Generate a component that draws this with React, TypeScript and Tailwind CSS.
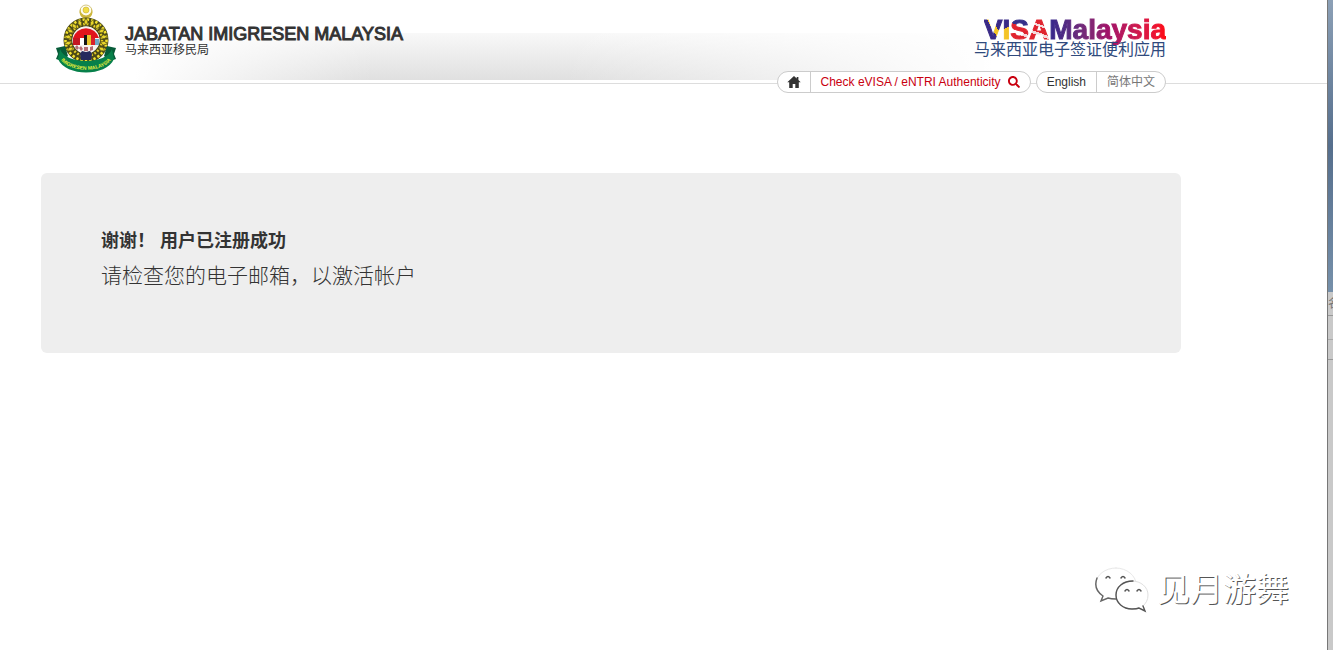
import { FaSearch } from "react-icons/fa";

const LEAVES = Array.from({ length: 13 }, (_, i) => (i - 6) * 20);

const Emblem = () => (
  <svg viewBox="0 0 62 70" className="h-[70px] w-[62px] shrink-0" role="img" aria-label="Jabatan Imigresen Malaysia">
    {/* crescent and star */}
    <circle cx="31" cy="7" r="6" fill="#fffdf0" stroke="#c9b965" strokeWidth="0.8" />
    <path d="M26 4a6.5 6.5 0 1 0 10 0a5.4 5.4 0 1 1-10 0z" fill="#cdb63c" />
    <circle cx="31" cy="6" r="3" fill="#f2de45" stroke="#c4ad38" strokeWidth="0.6" />
    {/* wreath */}
    <circle cx="31" cy="36" r="18" fill="none" stroke="#4c4a17" strokeWidth="9" />
    <circle cx="31" cy="36" r="20.5" fill="none" stroke="#f3e22e" strokeWidth="2.6" strokeDasharray="2.4 2" />
    <circle cx="31" cy="36" r="16" fill="none" stroke="#e6cf25" strokeWidth="2.4" strokeDasharray="1.8 1.8" />
    {LEAVES.map((angle) => (
      <path key={angle} d="M31 14l2 4-2 3.5-2-3.5z" fill="#e9d62b" stroke="#5d5a1b" strokeWidth="0.7" transform={`rotate(${angle} 31 36)`} />
    ))}
    {/* shield */}
    <circle cx="31" cy="36" r="13.5" fill="#f7f4f1" />
    <path d="M18 34a13.5 13.5 0 0 1 26 0z" fill="#e0141c" />
    <path d="M18 34h7v7h-7z" fill="#c41722" />
    <path d="M25 34h4v7h-4z" fill="#fff" />
    <path d="M29 31h3v10h-3z" fill="#171717" />
    <path d="M32 31h4v10h-4z" fill="#e8c32a" />
    <path d="M36 34h4v7h-4z" fill="#d82029" />
    <path d="M40 35h4v6h-4z" fill="#6fa8c6" />
    <path d="M20 43l2-2 2 3-2 2zM24 44l2-2 2 3-2 2zM29 43h4v4h-4zM35 43l3-1v4l-3 1z" fill="#b56b72" />
    <path d="M25 50l2-3 4 1 4-1 2 3-1 6h-10z" fill="#252b5e" />
    {/* ribbon */}
    <path d="M1 44l9-2 3 10-6 5-6-2 2-5zM61 44l-9-2-3 10 6 5 6-2-2-5z" fill="#075b38" />
    <path d="M5 45C10 61 52 61 57 45l2 10C51 73 11 73 3 55z" fill="#07804a" />
    <path id="ribbon" d="M4 53C12 70 50 70 58 53" fill="none" />
    <text fontFamily="Liberation Sans, sans-serif" fontSize="5" fontWeight="bold" fill="#e7ef3a" textAnchor="middle">
      <textPath href="#ribbon" startOffset="50%">IMIGRESEN MALAYSIA</textPath>
    </text>
  </svg>
);

const HomeIcon = () => (
  <svg viewBox="0 0 14 12" className="h-3 w-3.5" fill="currentColor" aria-hidden="true">
    <path d="M7 0L0.3 6.3h1.9V12h3.5V8h2.6v4h3.5V6.3h1.9L11.4 4V1H9.7v1.5z" />
  </svg>
);

const VisaLogo = () => (
  <a href="#" className="flex flex-col items-end">
    <span className="text-[28px] leading-6 font-bold [-webkit-text-stroke:1px_transparent]">
      <span className="bg-[linear-gradient(60deg,#3a2a86_48%,#f4c426_48%,#f4c426_62%,#3a2a86_62%)] bg-clip-text text-transparent">V</span>
      <span className="bg-[linear-gradient(150deg,#3a2a86_45%,#f4c426_45%)] bg-clip-text text-transparent">I</span>
      <span className="bg-[linear-gradient(20deg,#e0242f_36%,#f3d8da_36%,#f3d8da_44%,#e0242f_44%,#e0242f_60%,#35308a_60%)] bg-clip-text text-transparent">S</span>
      <span className="bg-[linear-gradient(20deg,#e0242f_34%,#f3d8da_34%,#f3d8da_42%,#e0242f_42%,#e0242f_58%,#f3d8da_58%,#f3d8da_64%,#e0242f_64%)] bg-clip-text text-transparent">A</span>
      <span className="bg-linear-to-r from-[#33268c] via-[#a01269] to-[#ff0a0a] bg-clip-text text-transparent">Malaysia</span>
    </span>
    <span className="text-base leading-4 text-[#2f4a7d]">马来西亚电子签证便利应用</span>
  </a>
);

const WeChatIcon = () => (
  <svg viewBox="0 0 54 46" className="h-[46px] w-[54px]" fill="#fff" strokeLinecap="round" aria-hidden="true">
    <path d="M21 1C10 1 1 8 1 17c0 5 3 9 7 12l-2 5 7-3c3 1 6 1 9 1 10 0 19-7 19-15S32 1 21 1z" stroke="#e8e8e8" />
    <path d="M2 11c-3 8 0 14 6 18l-2 5 7-3c3 1 5 1 8 1" fill="none" stroke="#666" strokeWidth="1.4" />
    <path d="M37 14c-9 0-16 6-16 14s7 14 16 14c3 0 5 0 7-1l6 3-2-5c3-3 5-6 5-11 0-8-7-14-16-14z" stroke="#e0e0e0" />
    <path d="M38 14c-10 0-17 6-17 14s7 14 16 14c3 0 5 0 7-1l6 3-2-5" fill="none" stroke="#555" strokeWidth="1.4" />
    <path d="M11 11q2-3 4 0M26 11q2-3 4 0M30 24q2-3 4 0M42 24q2-3 4 0" fill="none" stroke="#555" strokeWidth="1.5" />
  </svg>
);

const Header = () => (
  <header>
    <div className="h-[84px] border-b border-[#ddd]">
      <div className="flex h-20 max-w-[1181px] items-start justify-between bg-[linear-gradient(100deg,#fff_12%,transparent_32%,transparent_48%,#fff_84%),linear-gradient(to_bottom,#f8f8f8,#e0e0e0)] bg-[length:100%_47px] bg-bottom bg-no-repeat pr-[15px] pl-[55px]">
        <a href="#" className="flex gap-2 pt-1">
          <Emblem />
          <span className="flex flex-col pt-5 text-[#333]">
            <span className="text-lg leading-5 [-webkit-text-stroke:1px_#333]">JABATAN IMIGRESEN MALAYSIA</span>
            <span className="text-xs leading-3">马来西亚移民局</span>
          </span>
        </a>
        <div className="pt-[18px]">
          <VisaLogo />
        </div>
      </div>
    </div>
    <nav className="relative -mt-[13px] flex max-w-[1166px] justify-end gap-[5px] text-xs text-[#333]">
      <div className="flex h-[22px] overflow-hidden rounded-full border border-[#ccc] bg-white">
        <a href="#" aria-label="Home" className="flex items-center border-r border-[#ccc] px-[9px]">
          <HomeIcon />
        </a>
        <a href="#" className="flex items-center gap-[7px] px-2.5 text-[#c9000f]">
          Check eVISA / eNTRI Authenticity
          <FaSearch className="h-3 w-3" />
        </a>
      </div>
      <div className="flex h-[22px] overflow-hidden rounded-full border border-[#ccc] bg-white">
        <button type="button" className="border-r border-[#ccc] px-2.5">English</button>
        <button type="button" className="px-2.5 text-[#777]">简体中文</button>
      </div>
    </nav>
  </header>
);

// sliver of the window that lies behind the page
const WindowEdge = () => (
  <aside className="flex w-1.5 shrink-0 flex-col overflow-hidden border-l border-[#777] bg-[#c9c9c9]">
    <div className="h-[292px] bg-linear-to-b from-[#8ca0b6] via-[#566f8d] to-[#7690aa]" />
    <div className="h-6 border-b border-[#999] pt-1 text-xs leading-4 text-[#777]">名</div>
    <div className="h-6 border-b border-[#aaa]" />
    <div className="h-5 border-b border-[#999]" />
  </aside>
);

const App = () => {
  return (
    <div className="relative flex min-h-screen bg-white font-['Liberation_Sans','Noto_Sans_CJK_SC',sans-serif]">
      <div className="min-w-0 flex-1">
        <Header />
        <main className="mt-20 ml-[41px] max-w-[1140px] rounded-md bg-[#eee] px-[60px] pt-[54px] pb-[60px] text-[#333]">
          <h1 className="text-lg leading-7 font-bold">谢谢！ 用户已注册成功</h1>
          <p className="mt-1 text-[21px] leading-[34px] font-light">请检查您的电子邮箱，以激活帐户</p>
        </main>
      </div>
      <WindowEdge />
      <div className="absolute right-11 bottom-9 flex items-center gap-2">
        <WeChatIcon />
        <span className="text-[33px] leading-12 text-white [text-shadow:1px_1px_0_#555]">见月游舞</span>
      </div>
    </div>
  );
};

export default App;
